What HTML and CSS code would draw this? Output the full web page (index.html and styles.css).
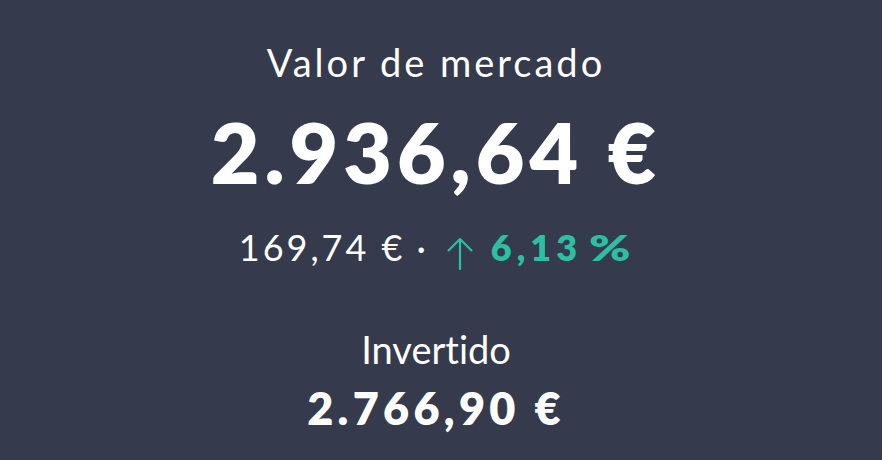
FILE: index.html
```html
<!DOCTYPE HTML>
<html>
<head>
    <title>Valor de mercado</title>
    <meta charset="utf-8">
    <link rel="stylesheet" href="styles.css">
</head>
<body>
    <div class="summary">
        <div class="label label-market">Valor de mercado</div>
        <div class="total">2.936,64 €</div>
        <div class="change">
            <span class="amount">169,74 €</span><span class="sep">·</span><svg class="arrow" width="26" height="33" viewBox="0 0 26 33">
                <path d="M13 32 V2 M1.5 13.5 L13 2 L24.5 13.5" fill="none" stroke="#2bbfa4" stroke-width="2.2" stroke-linecap="round" stroke-linejoin="round"/>
            </svg><span class="pct"><span class="pct-num">6,13</span><span class="pct-sign">%</span></span>
        </div>
        <div class="label label-invested">Invertido</div>
        <div class="invested">2.766,90 €</div>
    </div>
</body>
</html>
```

FILE: styles.css
```css
* {
    box-sizing: border-box;
}

body {
    margin: 0;
    padding: 0;
    background: #353a4d;
    color: #ffffff;
    font-family: Lato, "Noto Sans", sans-serif;
    font-variant-ligatures: none;
    height: 460px;
    overflow: hidden;
}

.summary {
    display: flex;
    flex-direction: column;
    align-items: center;
    padding-top: 43px;
    padding-right: 10px;
}

.label {
    font-size: 38px;
    line-height: 38px;
    font-weight: 400;
}

.label-market {
    letter-spacing: 3px;
}

.total {
    font-size: 84px;
    line-height: 84px;
    font-weight: 800;
    letter-spacing: 5px;
    margin-top: 29px;
}

.change {
    font-size: 36px;
    line-height: 36px;
    margin-top: 35px;
    padding-right: 14px;
    white-space: nowrap;
}

.amount {
    letter-spacing: 3px;
}

.sep {
    margin-left: 11px;
}

.arrow {
    display: inline-block;
    margin-left: 21px;
    margin-bottom: -9px;
}

.pct {
    color: #2bbfa4;
    font-weight: 800;
    margin-left: 18px;
}

.pct-num {
    letter-spacing: 5px;
}

.pct-sign {
    display: inline-block;
    margin-left: 7px;
    transform: scaleX(1.38);
    transform-origin: left center;
}

.label-invested {
    margin-top: 65px;
}

.invested {
    font-size: 45px;
    line-height: 45px;
    font-weight: 800;
    letter-spacing: 4.3px;
    margin-top: 18px;
}
```
